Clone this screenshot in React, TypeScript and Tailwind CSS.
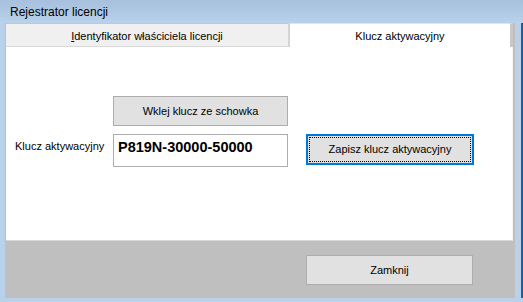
const ui = "font-['Liberation_Sans',Arial,sans-serif]";

function Button({ label, className = "" }: { label: string; className?: string }) {
  return (
    <div
      className={`flex items-center justify-center border border-[#adadad] bg-[#e1e1e1] text-[11px] text-black ${className}`}
    >
      {label}
    </div>
  );
}

export default function App() {
  return (
    <div className={`flex h-[302px] w-[523px] flex-col bg-[#b9d1ea] ${ui}`}>
      {/* title bar */}
      <div className="flex h-[23px] items-center bg-gradient-to-b from-[#a6c0dd] to-[#b9d1ea] pl-[10px] text-[12px] text-black">
        Rejestrator licencji
      </div>

      <div className="flex flex-1">
        <div className="w-[5px]" />
        {/* client area */}
        <div className="flex w-[510px] flex-col bg-[#bfbfbf]">
          {/* tab control */}
          <div className="ml-[1px] flex w-[507px] flex-col">
            <div className="flex h-[24px]">
              <div className="flex w-[282px] items-center justify-center border-t border-b border-t-[#c8c8c8] border-b-[#d9d9d9] bg-[#f0f0f0] pt-[2px] text-[11px] text-black">
                <span className="underline">I</span>dentyfikator właściciela licencji
              </div>
              <div className="w-[2px] bg-[#d4d4d4]" />
              <div className="flex flex-1 items-center justify-center border-t border-r-[3px] border-t-[#e3e3e3] border-r-[#c8c8c8] bg-white pt-[2px] text-[11px] text-black">
                Klucz aktywacyjny
              </div>
            </div>
            <div className="flex h-[194px] flex-col border-r border-b border-r-[#f4f4f4] border-b-[#d9d9d9] bg-white">
              <div className="pl-[107px] pt-[49px]">
                <Button label="Wklej klucz ze schowka" className="h-[30px] w-[175px]" />
              </div>
              <div className="mt-[8px] flex items-start">
                <div className="w-[107px] pl-[9px] pt-[4px] text-[11px] text-black">
                  Klucz aktywacyjny
                </div>
                <div className="h-[33px] w-[175px] border border-[#adadad] bg-white pl-[4px] pt-[2px] text-[14.5px] font-bold text-black">
                  P819N-30000-50000
                </div>
                <div className="ml-[18px] h-[31px] w-[168px] border-2 border-[#0078d7] bg-[#e1e1e1] p-[1px]">
                  <div className="flex h-full items-center justify-center border border-dotted border-black text-[11px] text-black">
                    Zapisz klucz aktywacyjny
                  </div>
                </div>
              </div>
            </div>
          </div>
          {/* bottom bar */}
          <div className="flex flex-1 pl-[301px] pt-[14px]">
            <Button label="Zamknij" className="h-[30px] w-[167px]" />
          </div>
        </div>
        <div className="w-[6px]" />
        <div className="w-[2px] bg-[#1d5f9c]" />
      </div>
      <div className="h-[4px]" />
    </div>
  );
}
